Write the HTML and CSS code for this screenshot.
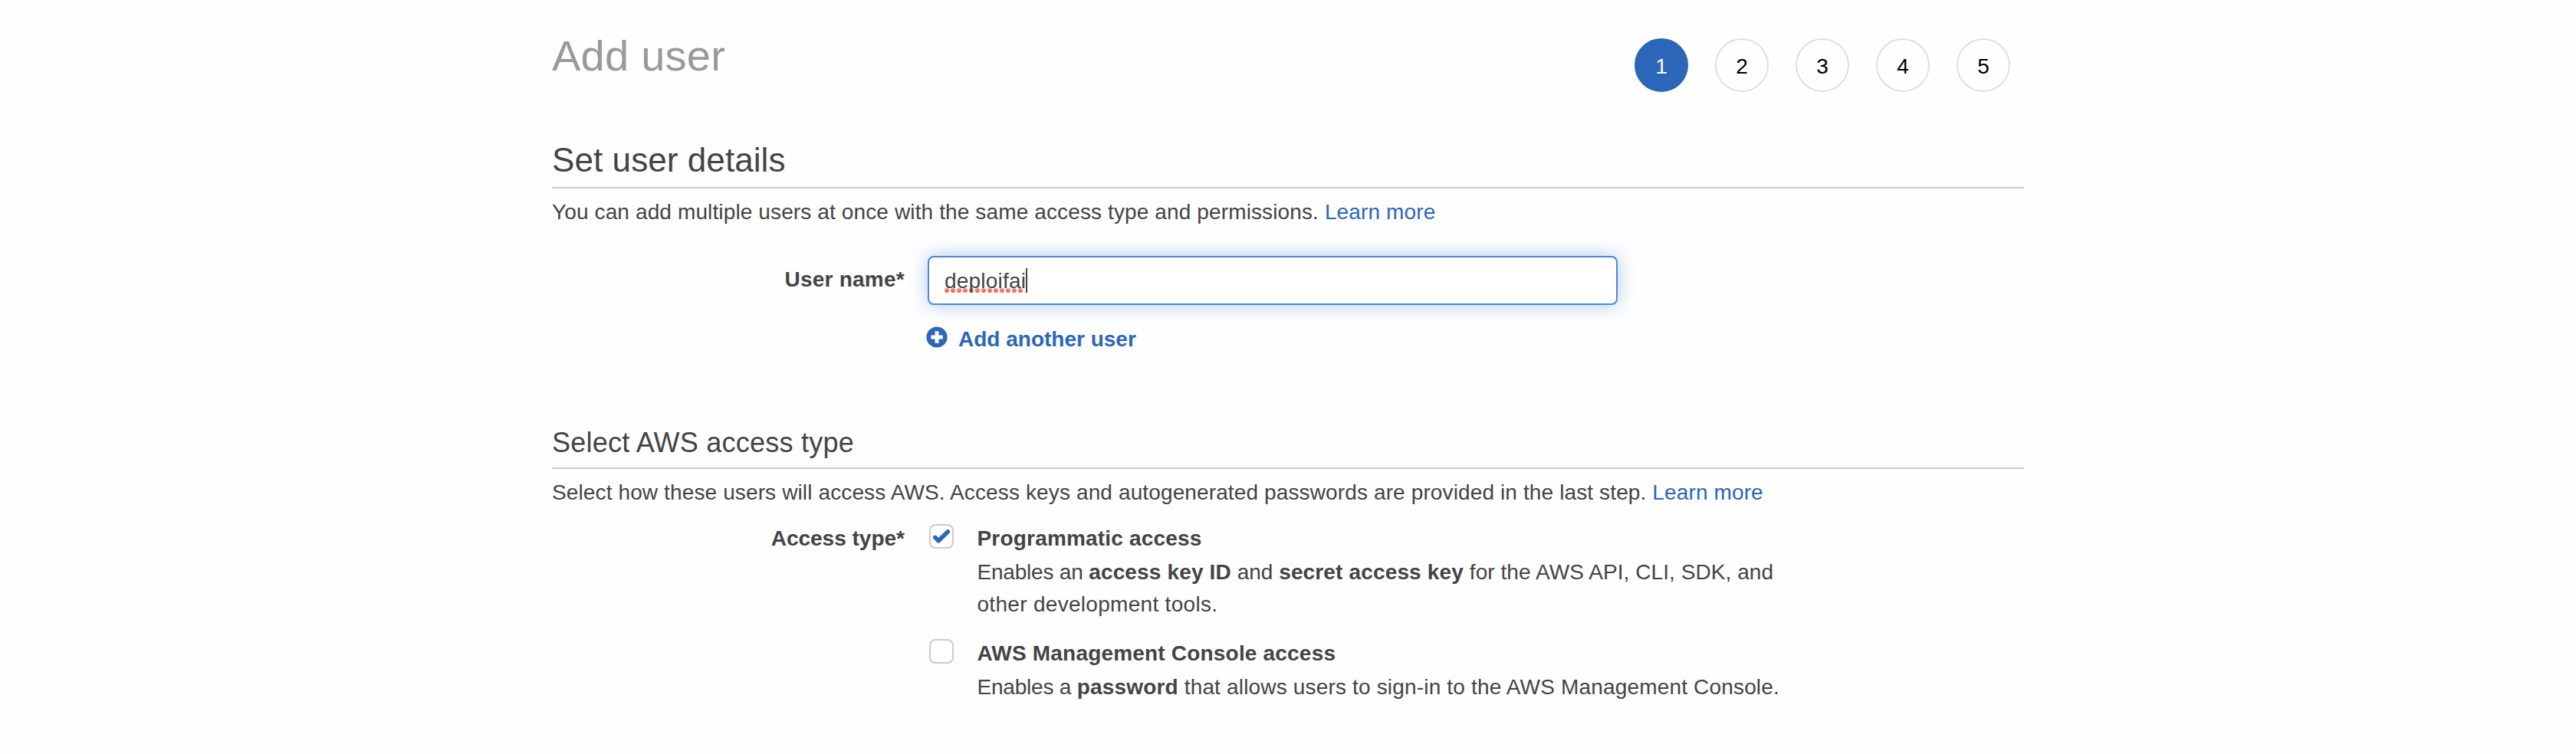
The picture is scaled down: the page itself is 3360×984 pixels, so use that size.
FILE: index.html
```html
<!DOCTYPE html>
<html lang="en">
<head>
<meta charset="utf-8">
<title>Add user</title>
<link rel="stylesheet" href="styles.css">
</head>
<body>
<main class="wizard">
  <header class="wizard-header">
    <h1 class="page-title">Add user</h1>
    <ol class="steps">
      <li class="step step-active">1</li>
      <li class="step">2</li>
      <li class="step">3</li>
      <li class="step">4</li>
      <li class="step">5</li>
    </ol>
  </header>

  <section class="details">
    <h2 class="section-title">Set user details</h2>
    <p class="intro">You can add multiple users at once with the same access type and permissions. <a class="link" href="#">Learn more</a></p>
    <div class="form-row form-row-name">
      <div class="label label-name">User name*</div>
      <div class="field">
        <div class="text-input"><span class="typed">deploifai<svg class="spelling" width="104" height="6" viewBox="0 0 104 6"><defs><linearGradient id="dot" gradientUnits="userSpaceOnUse" x1="0" y1="0" x2="0" y2="6"><stop offset="0" stop-color="#f59b92"/><stop offset="1" stop-color="#ee5547"/></linearGradient></defs><path d="M4 3H100.5"/></svg></span><span class="caret"></span></div>
        <a class="add-link" href="#">
          <svg class="plus-icon" width="28" height="28" viewBox="0 0 28 28"><circle cx="14" cy="14" r="13.6"/><path d="M14 6.3V21.7M6.3 14H21.7"/></svg>
          <span class="add-text">Add another user</span>
        </a>
      </div>
    </div>
  </section>

  <section class="access">
    <h3 class="sub-title">Select AWS access type</h3>
    <p class="intro">Select how these users will access AWS. Access keys and autogenerated passwords are provided in the last step. <a class="link" href="#">Learn more</a></p>
    <div class="form-row form-row-access">
      <div class="label">Access type*</div>
      <div class="options">
        <div class="option">
          <span class="checkbox"><svg class="check-icon" width="22" height="18" viewBox="0 0 22 18"><path d="M2.9 10.4L7.1 14.8L19.2 2.9"/></svg></span>
          <div class="option-body">
            <div class="option-title">Programmatic access</div>
            <div class="option-text"><span class="lead">Enables an </span><b>access key ID</b> and <b>secret access key</b><span class="rest"> for the AWS API, CLI, SDK, and</span><br><span class="rest rest-loose">other development tools.</span></div>
          </div>
        </div>
        <div class="option">
          <span class="checkbox"></span>
          <div class="option-body">
            <div class="option-title">AWS Management Console access</div>
            <div class="option-text"><span class="lead">Enables a </span><b>password</b><span class="rest rest-wide"> that allows users to sign-in to the AWS Management Console.</span></div>
          </div>
        </div>
      </div>
    </div>
  </section>
</main>
</body>
</html>
```
FILE: styles.css
```css
* { box-sizing: border-box; }

body {
  margin: 0;
  background: #fefefe;
  color: #444;
  font: 28px/40px "Liberation Sans", Arial, sans-serif;
}

h1, h2, h3, p, ol { margin: 0; padding: 0; font-weight: normal; }
a { color: #2b66b8; text-decoration: none; }

.wizard { width: 1920px; margin: 0 auto; }

.wizard-header {
  display: flex;
  justify-content: space-between;
  align-items: flex-start;
  height: 183px;
}
.page-title { padding-top: 41px; font-size: 56px; line-height: 64px; letter-spacing: 0.25px; color: #999; }

.steps { display: flex; gap: 35px; padding: 50px 18px 0 0; list-style: none; }
.step {
  width: 70px;
  height: 70px;
  border: 2px solid #e0e0e0;
  border-radius: 50%;
  color: #000;
  line-height: 69px;
  text-align: center;
}
.step-active { border-color: #2b66b8; background: #2b66b8; color: #fff; }

.section-title { padding-bottom: 9px; border-bottom: 2px solid #ccc; font-size: 44px; line-height: 52px; letter-spacing: 0.08px; }
.sub-title { margin-top: 93px; padding-bottom: 10px; border-bottom: 2px solid #ccc; font-size: 36px; line-height: 44px; letter-spacing: 0.23px; }
.intro { margin-top: 11px; letter-spacing: 0.125px; white-space: nowrap; }

.form-row { display: grid; grid-template-columns: 460px 1fr; column-gap: 30px; }
.form-row-name { margin-top: 37px; }
.form-row-access { margin-top: 20px; column-gap: 32px; }
.label { font-weight: bold; text-align: right; }
.label-name { padding-top: 11px; letter-spacing: 0.25px; }

.text-input {
  display: flex;
  align-items: center;
  width: 900px;
  height: 64px;
  padding: 2px 20px 0;
  border: 2px solid #4a88d9;
  border-radius: 8px;
  background: #fff;
  box-shadow: 0 0 24px rgba(74, 136, 217, 0.45);
}
.typed { position: relative; isolation: isolate; letter-spacing: 0.2px; }
.spelling { position: absolute; z-index: -1; left: -1px; bottom: 5px; }
.spelling path { stroke: url(#dot); stroke-width: 6; stroke-linecap: round; stroke-dasharray: 0 8; }
.caret { width: 2px; height: 32px; margin-top: -2px; background: #444; }

.add-link { display: flex; align-items: center; margin: 25px 0 0 -2px; font-weight: bold; }
.plus-icon { margin: -6px 14px 0 0; fill: #2b66b8; }
.plus-icon path { stroke: #fff; stroke-width: 5; }

.option { display: flex; align-items: flex-start; gap: 30.5px; }
.option + .option { margin-top: 23px; }
.checkbox {
  display: flex;
  align-items: center;
  justify-content: center;
  width: 32px;
  height: 32px;
  margin-top: 1px;
  border: 2px solid #ccc;
  border-radius: 8px;
  background: #fff;
}
.check-icon path { fill: none; stroke: #2b66b8; stroke-width: 5.6; stroke-linecap: round; stroke-linejoin: round; }
.option-title { font-weight: bold; letter-spacing: 0.19px; }
.option-text { margin-top: 3px; line-height: 42px; white-space: nowrap; }
.option-text b { letter-spacing: 0.15px; }
.lead { letter-spacing: -0.2px; }
.rest { letter-spacing: 0.07px; }
.rest-loose { letter-spacing: 0.3px; }
.rest-wide { letter-spacing: 0.17px; }
```
